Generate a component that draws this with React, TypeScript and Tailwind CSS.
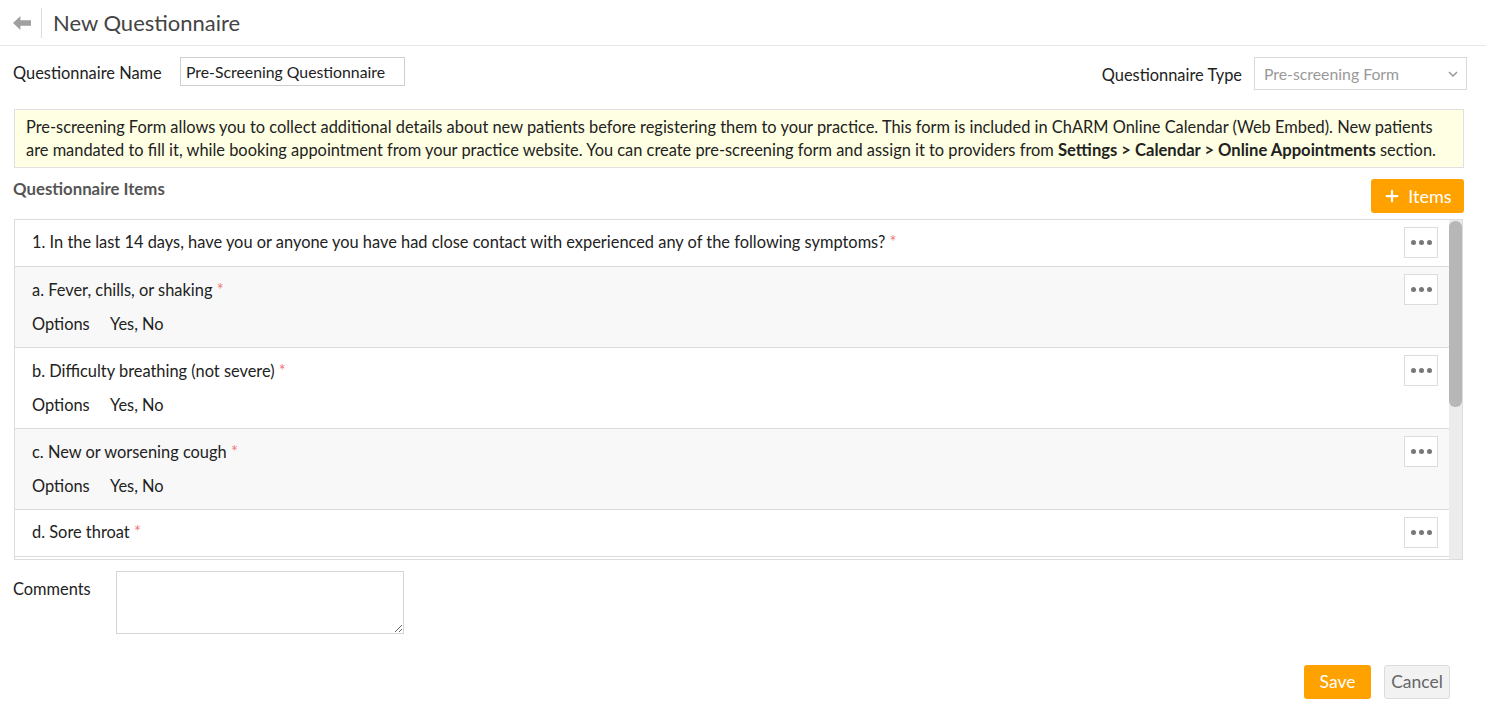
import { Plus } from "lucide-react";

const ITEMS = [
  { id: "1", title: "1. In the last 14 days, have you or anyone you have had close contact with experienced any of the following symptoms?", options: null, shaded: false },
  { id: "a", title: "a. Fever, chills, or shaking", options: "Yes, No", shaded: true },
  { id: "b", title: "b. Difficulty breathing (not severe)", options: "Yes, No", shaded: false },
  { id: "c", title: "c. New or worsening cough", options: "Yes, No", shaded: true },
  { id: "d", title: "d. Sore throat", options: null, shaded: false },
];

function Dots() {
  return (
    <button className="flex h-[31px] w-[34px] shrink-0 items-center justify-center gap-[3px] border border-[#dcdcdc] bg-white">
      <span className="h-[5px] w-[5px] rounded-full bg-[#777]" />
      <span className="h-[5px] w-[5px] rounded-full bg-[#777]" />
      <span className="h-[5px] w-[5px] rounded-full bg-[#777]" />
    </button>
  );
}

export default function App() {
  return (
    <div className="min-h-screen bg-white text-[16.4px] text-[#222]" style={{ fontFamily: "Lato, 'Noto Sans', sans-serif" }}>
      {/* header */}
      <div className="flex h-[46px] items-center border-b border-[#e6e6e6]">
        <div className="flex w-[41px] justify-center pl-[2px]">
          <svg width="18" height="14" viewBox="0 0 17 13" fill="#a0a0a0">
            <path d="M0 6.5 L7 0 L7 4 L17 4 L17 9 L7 9 L7 13 Z" />
          </svg>
        </div>
        <div className="h-[30px] w-px bg-[#dddddd]" />
        <h1 className="pl-[11px] text-[22px] text-[#444]">New Questionnaire</h1>
      </div>

      <div className="pl-[13px] pr-[19px]">
        {/* name / type row */}
        <div className="mt-[11px] flex items-start justify-between">
          <div className="flex items-center">
            <span className="w-[167px] pt-[4px]">Questionnaire Name</span>
            <div className="flex h-[29px] w-[225px] items-center border border-[#cfcfcf] px-[5px] text-[15.8px]">Pre-Screening Questionnaire</div>
          </div>
          <div className="flex items-center gap-[12px]">
            <span className="pt-[4px]">Questionnaire Type</span>
            <div className="flex h-[33px] w-[213px] items-center justify-between border border-[#d9d9d9] pl-[9px] pr-[8px] text-[15.8px] text-[#999]">
              <span>Pre-screening Form</span>
              <svg width="10" height="6" viewBox="0 0 10 6" fill="none" stroke="#999" strokeWidth="1.5">
                <path d="M1 1 L5 5 L9 1" />
              </svg>
            </div>
          </div>
        </div>

        {/* info box */}
        <div className="ml-px mr-[3px] mt-[19px] border border-[#e0e0e0] bg-[#ffffe3] px-[11px] py-[5px] leading-[23px]">
          Pre-screening Form allows you to collect additional details about new patients before registering them to your practice. This form is included in ChARM Online Calendar (Web Embed). New patients are mandated to fill it, while booking appointment from your practice website. You can create pre-screening form and assign it to providers from{" "}
          <b className="text-[16.6px]">Settings &gt; Calendar &gt; Online Appointments</b> section.
        </div>

        {/* items heading */}
        <div className="mr-[3px] mt-[11px] flex items-start justify-between">
          <span className="text-[16.8px] font-bold leading-[20px] text-[#555]">Questionnaire Items</span>
          <button className="flex h-[34px] w-[93px] items-center justify-center gap-[7px] rounded-[3px] bg-[#ffa200] text-[18px] text-white">
            <Plus size={18} strokeWidth={3} />
            <span>Items</span>
          </button>
        </div>

        {/* list */}
        <div className="ml-px mr-[4px] mt-[6px] flex h-[341px] overflow-hidden border border-[#dcdcdc]">
          <div className="flex-1">
            {ITEMS.map((it) => (
              <div
                key={it.id}
                className={`flex items-start justify-between border-b border-[#dcdcdc] pl-[17px] pr-[11px] ${it.shaded ? "bg-[#f8f8f8]" : "bg-white"} ${it.options ? "h-[81px] pt-[13px]" : "h-[47px] pt-[12px]"}`}
              >
                <div className="flex flex-col">
                  <div className="leading-[20px]">
                    {it.title} <span className="text-[#f07a7a]">*</span>
                  </div>
                  {it.options && (
                    <div className="mt-[14px] flex leading-[20px]">
                      <span className="w-[78px]">Options</span>
                      <span>{it.options}</span>
                    </div>
                  )}
                </div>
                <div className={it.options ? "-mt-[6px]" : "-mt-[5px]"}>
                  <Dots />
                </div>
              </div>
            ))}
          </div>
          <div className="w-[13px] bg-[#ececec] py-[1px]">
            <div className="h-[186px] w-full rounded-[6px] bg-[#b7b7b7]" />
          </div>
        </div>

        {/* comments */}
        <div className="mt-[11px] flex items-start">
          <span className="w-[103px] pt-[6px]">Comments</span>
          <textarea className="h-[63px] w-[288px] resize border border-[#d6d6d6] outline-none" />
        </div>

        {/* actions */}
        <div className="mr-[17px] mt-[31px] flex justify-end gap-[13px]">
          <button className="h-[34px] w-[67px] rounded-[3px] bg-[#ffa200] text-[17.5px] text-white">Save</button>
          <button className="h-[34px] w-[66px] rounded-[3px] border border-[#dcdcdc] bg-[#f2f2f2] text-[17.5px] text-[#666]">Cancel</button>
        </div>
      </div>
    </div>
  );
}
